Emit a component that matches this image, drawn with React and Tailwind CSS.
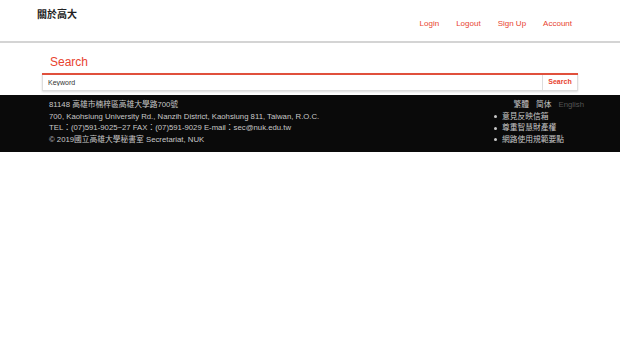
import React from 'react';

const font = { fontFamily: '"Liberation Sans", "Noto Sans CJK TC", sans-serif' };

const navLinks = ['Login', 'Logout', 'Sign Up', 'Account'];

const footerLinks = ['意見反映信箱', '尊重智慧財產權', '網路使用規範要點'];

export default function App() {
  return (
    <div className="min-h-[343px] w-[620px] bg-white" style={font}>
      {/* Header */}
      <header className="flex h-[43px] items-start justify-between border-b-2 border-[#d4d4d4] pl-[37px] pr-[48px]">
        <div className="pt-[8px] text-[10px] font-bold leading-[14px] text-[#222]">關於高大</div>
        <nav className="flex gap-[17px] pt-[18px] text-[8px] leading-[12px] text-[#e8432f]">
          {navLinks.map((l) => (
            <a key={l} href="#">{l}</a>
          ))}
        </nav>
      </header>

      {/* Search */}
      <section className="px-[42px] pt-[10px]">
        <h2 className="pl-[8px] text-[12px] leading-[18px] text-[#e8432f]">Search</h2>
        <div className="mt-[2px] flex h-[18px] border-t-2 border-[#e0503c] shadow-[0_1px_2px_rgba(0,0,0,0.15)]">
          <input
            className="h-full min-w-0 flex-1 border border-t-0 border-[#ddd] px-[5px] text-[7px] text-[#333] outline-none placeholder:text-[#333]"
            placeholder="Keyword"
          />
          <button className="h-full w-[35px] border border-l-0 border-t-0 border-[#ddd] text-[7px] font-bold text-[#e8432f]">
            Search
          </button>
        </div>
      </section>

      {/* Footer */}
      <footer className="mt-[4px] flex h-[57px] justify-between bg-[#0a0a0a] pl-[49px] pr-[36px] pt-[4px] text-[7.75px] leading-[11.7px] text-[#c8c8c8]">
        <div>
          <p>81148 高雄市楠梓區高雄大學路700號</p>
          <p>700, Kaohsiung University Rd., Nanzih District, Kaohsiung 811, Taiwan, R.O.C.</p>
          <p>TEL：(07)591-9025~27 FAX：(07)591-9029 E-mail：sec@nuk.edu.tw</p>
          <p>© 2019國立高雄大學秘書室 Secretariat, NUK</p>
        </div>
        <div className="flex flex-col items-end">
          <div className="flex gap-[7px]">
            <span>繁體</span>
            <span>简体</span>
            <span className="text-[#555]">English</span>
          </div>
          <ul className="mr-[20px] flex flex-col">
            {footerLinks.map((t) => (
              <li key={t} className="flex items-center gap-[5px]">
                <span className="inline-block h-[3px] w-[3px] rounded-full bg-[#c8c8c8]" />
                {t}
              </li>
            ))}
          </ul>
        </div>
      </footer>
    </div>
  );
}
